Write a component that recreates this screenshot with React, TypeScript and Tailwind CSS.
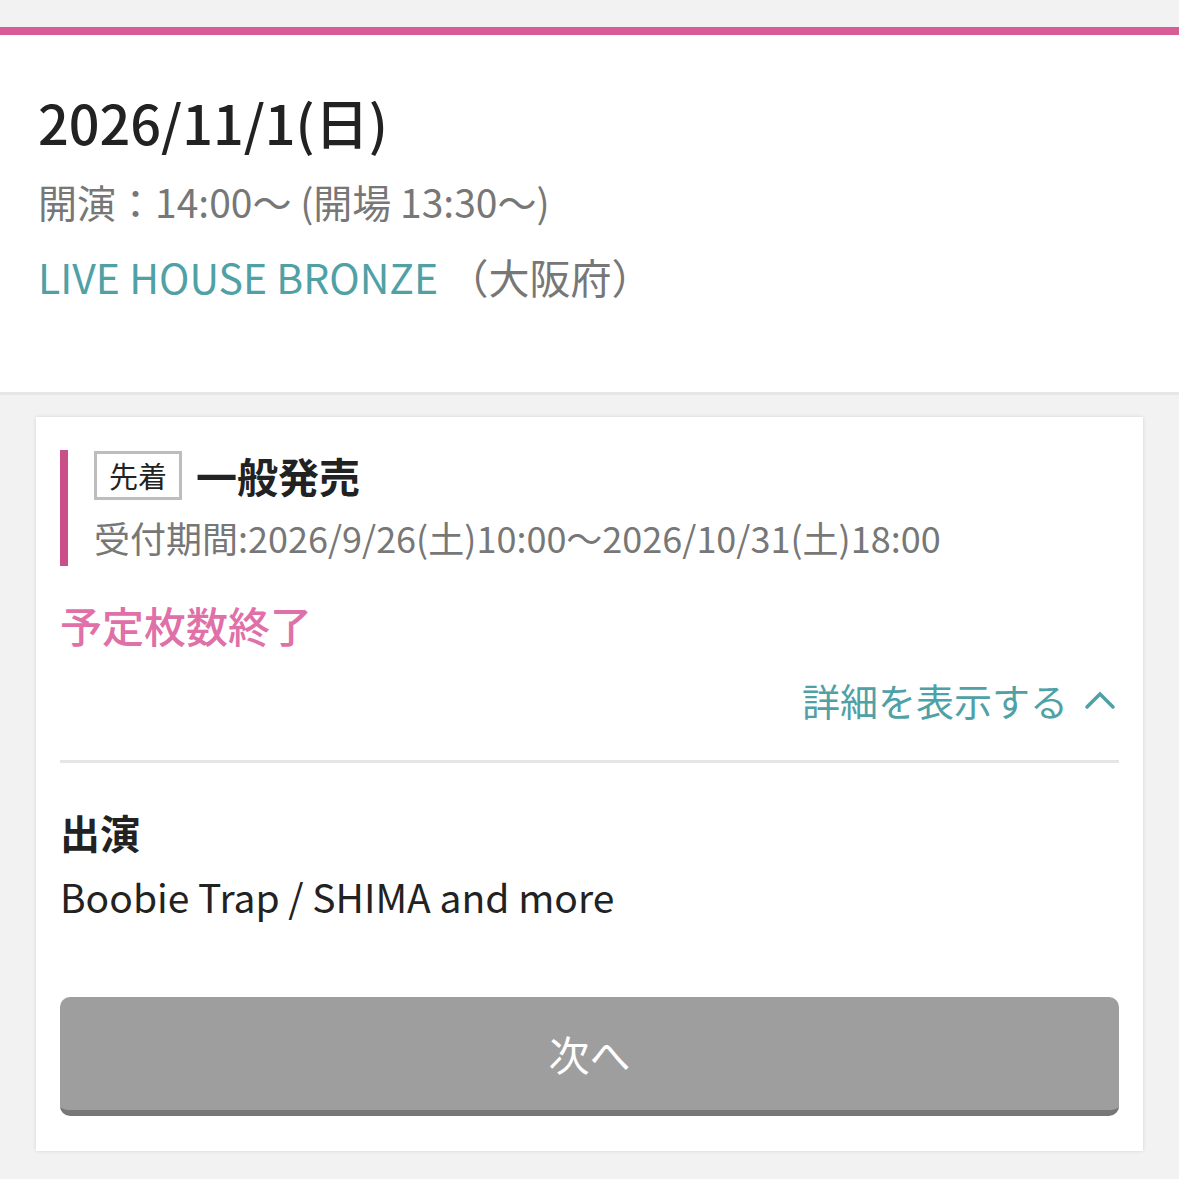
import React from 'react';

const font = { fontFamily: '"Noto Sans CJK JP", "Noto Sans", sans-serif' };

const App: React.FC = () => {
  return (
    <div className="min-h-[1179px] bg-[#f2f2f2] text-[#222]" style={font}>
      {/* Event header */}
      <div className="pt-[27px]">
        <div className="h-[8px] bg-[#d75d96]"></div>
        <div className="bg-white px-[38px] pt-[47px] pb-[86px] border-b-[3px] border-[#e6e6e6]">
          <h1 className="text-[54px] leading-[80px] font-medium text-[#222]">2026/11/1(日)</h1>
          <p className="mt-[10px] text-[39px] leading-[58px] text-[#777]">開演：14:00〜 (開場 13:30〜)</p>
          <p className="mt-[16px] text-[41px] leading-[60px]">
            <span className="text-[#4fa1a6]">LIVE HOUSE BRONZE</span>
            <span className="text-[#777]"> （大阪府）</span>
          </p>
        </div>
      </div>

      {/* Ticket card */}
      <div className="px-[36px] pt-[22px] pb-[28px]">
        <div className="bg-white shadow-[0_0_4px_rgba(0,0,0,0.12)] px-[24px] pt-[33px] pb-[35px]">
          <div className="border-l-[8px] border-[#c95088] pl-[26px]">
            <div className="flex items-center gap-[14px]">
              <span className="border-[3px] border-[#bdbdbd] text-[29px] leading-[43px] px-[12px] text-[#222]">先着</span>
              <span className="text-[41px] leading-[50px] font-bold">一般発売</span>
            </div>
            <p className="mt-[8px] text-[36px] leading-[58px] text-[#777]">受付期間:2026/9/26(土)10:00〜2026/10/31(土)18:00</p>
          </div>

          <p className="mt-[28px] text-[42px] leading-[62px] font-medium text-[#e070a8]">予定枚数終了</p>

          <div className="mt-[14px] flex justify-end items-center gap-[16px] pr-[3px]">
            <span className="text-[38px] leading-[60px] text-[#4fa1a6]">詳細を表示する</span>
            <svg width="32" height="22" viewBox="0 0 32 22" fill="none" stroke="#4fa1a6" strokeWidth="3.5" strokeLinecap="round">
              <path d="M3 18 L16 5 L29 18" />
            </svg>
          </div>

          <div className="mt-[30px] h-[3px] bg-[#e6e6e6]"></div>

          <h3 className="mt-[40px] text-[40px] leading-[58px] font-bold">出演</h3>
          <p className="mt-[6px] text-[39px] leading-[58px] text-[#222]">Boobie Trap / SHIMA and more</p>

          <button className="mt-[72px] w-full h-[119px] rounded-[10px] bg-[#9e9e9e] border-b-[6px] border-[#777] text-white text-[41px] flex items-center justify-center">
            次へ
          </button>
        </div>
      </div>
    </div>
  );
};

export default App;
